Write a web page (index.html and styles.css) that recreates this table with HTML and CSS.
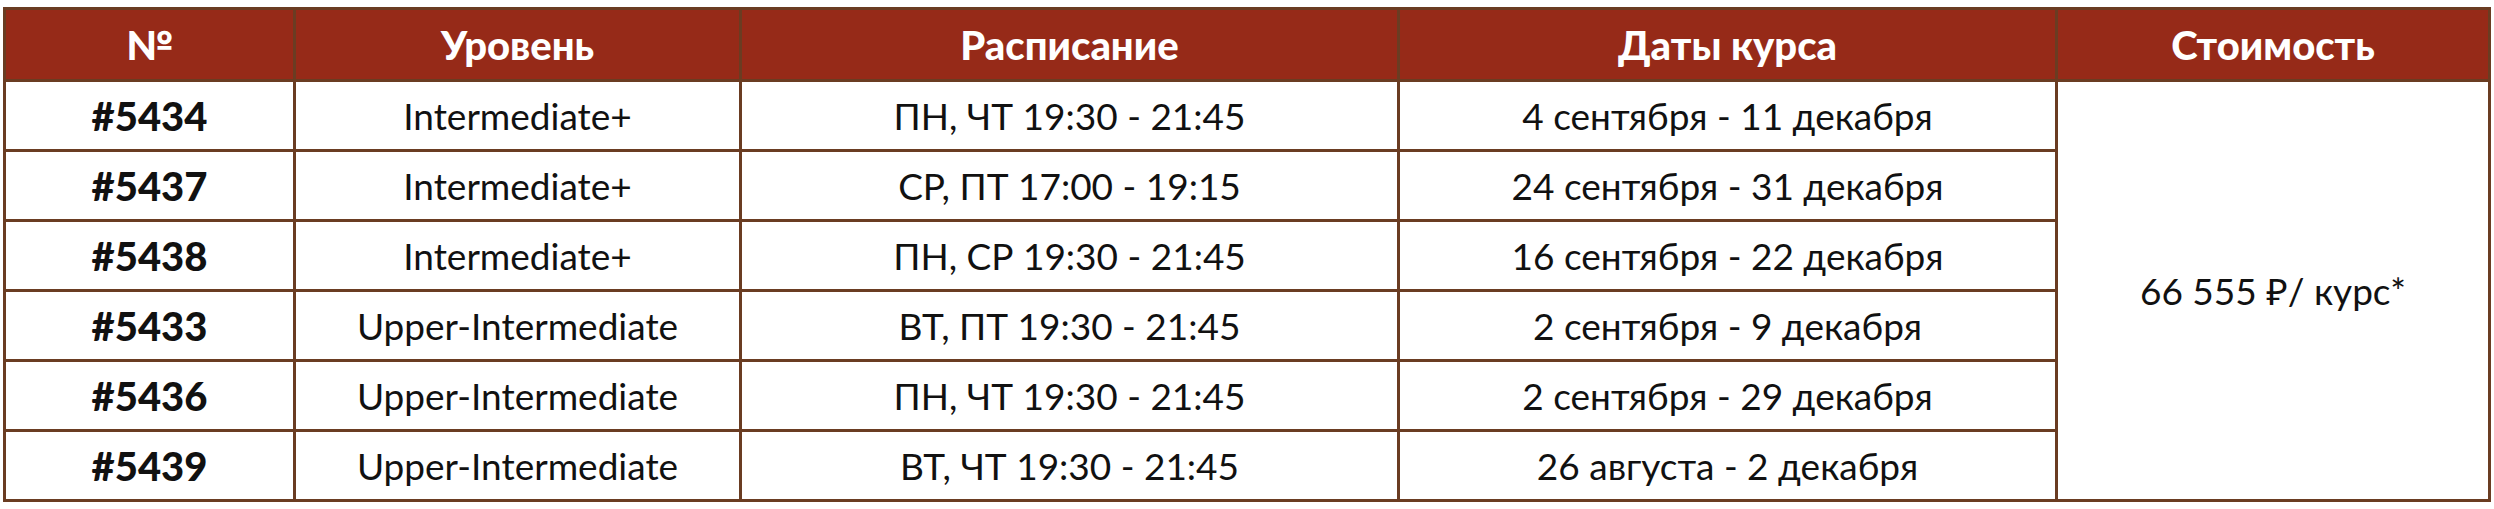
FILE: index.html
```html
<!DOCTYPE html>
<html lang="ru">
<head>
<meta charset="utf-8">
<title>Расписание курсов</title>
<link rel="stylesheet" href="styles.css">
</head>
<body>
<table class="schedule">
  <colgroup>
    <col class="c-num">
    <col class="c-level">
    <col class="c-time">
    <col class="c-dates">
    <col class="c-price">
  </colgroup>
  <thead>
    <tr>
      <th>№</th>
      <th>Уровень</th>
      <th>Расписание</th>
      <th>Даты курса</th>
      <th>Стоимость</th>
    </tr>
  </thead>
  <tbody>
    <tr>
      <td class="num">#5434</td>
      <td>Intermediate+</td>
      <td>ПН, ЧТ 19:30 - 21:45</td>
      <td>4 сентября - 11 декабря</td>
      <td class="price" rowspan="6">66 555 ₽/ курс*</td>
    </tr>
    <tr>
      <td class="num">#5437</td>
      <td>Intermediate+</td>
      <td>СР, ПТ 17:00 - 19:15</td>
      <td>24 сентября - 31 декабря</td>
    </tr>
    <tr>
      <td class="num">#5438</td>
      <td>Intermediate+</td>
      <td>ПН, СР 19:30 - 21:45</td>
      <td>16 сентября - 22 декабря</td>
    </tr>
    <tr>
      <td class="num">#5433</td>
      <td>Upper-Intermediate</td>
      <td>ВТ, ПТ 19:30 - 21:45</td>
      <td>2 сентября - 9 декабря</td>
    </tr>
    <tr>
      <td class="num">#5436</td>
      <td>Upper-Intermediate</td>
      <td>ПН, ЧТ 19:30 - 21:45</td>
      <td>2 сентября - 29 декабря</td>
    </tr>
    <tr>
      <td class="num">#5439</td>
      <td>Upper-Intermediate</td>
      <td>ВТ, ЧТ 19:30 - 21:45</td>
      <td>26 августа - 2 декабря</td>
    </tr>
  </tbody>
</table>
</body>
</html>
```

FILE: styles.css
```css
html, body {
  margin: 0;
  padding: 0;
  background: #ffffff;
}

body {
  padding: 7px 6px 0 3px;
  font-family: Lato, "Noto Sans", sans-serif;
  color: #111111;
}

.schedule {
  width: 2485px;
  border-collapse: collapse;
  table-layout: fixed;
}

.c-num { width: 290px; }
.c-level { width: 446px; }
.c-time { width: 658px; }
.c-dates { width: 658px; }
.c-price { width: 433px; }

.schedule th,
.schedule td {
  border: 3px solid #6a3c22;
  text-align: center;
  vertical-align: middle;
  padding: 0;
  line-height: 1;
}

.schedule th {
  background: #962a18;
  color: #ffffff;
  font-weight: 900;
  font-size: 40px;
  height: 69px;
}

.schedule td {
  height: 67px;
  font-size: 37px;
  font-weight: 400;
}

.schedule td.num {
  font-weight: 900;
  font-size: 40px;
}

.schedule td.price {
  font-size: 37px;
}
```
